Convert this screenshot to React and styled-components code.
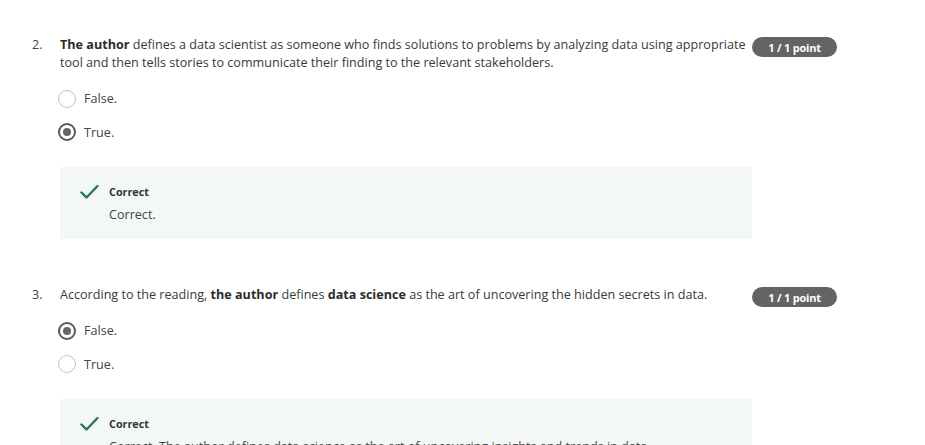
import React from "react";
import styled, { createGlobalStyle } from "styled-components";

const Global = createGlobalStyle`
  body {
    margin: 0;
    background: #fff;
    font-family: "Open Sans", "Noto Sans", sans-serif;
    color: #373a3c;
  }
`;

const Page = styled.div`
  padding: 36px 0 0 32px;
  height: 445px;
  box-sizing: border-box;
  overflow: hidden;
`;

const Question = styled.section`
  display: flex;
  align-items: flex-start;
  margin-bottom: 47px;
`;

const Number = styled.div`
  width: 28px;
  font-size: 12.6px;
  line-height: 18px;
  color: #444;
`;

const Content = styled.div`
  width: 692px;
`;

const Prompt = styled.p`
  margin: 0;
  font-size: 12.6px;
  line-height: 18px;
  b {
    font-weight: 700;
    color: #2b2b2b;
  }
`;

const Options = styled.div`
  margin-top: 10px;
  display: flex;
  flex-direction: column;
`;

const Option = styled.label`
  display: flex;
  align-items: center;
  height: 33.5px;
  font-size: 12.6px;
  color: #444;
`;

const Radio = styled.span`
  width: 18px;
  height: 18px;
  box-sizing: border-box;
  border-radius: 50%;
  margin: 0 8px 0 -2px;
  border: ${(p) => (p.$checked ? "2px solid #5a5a5a" : "1.5px solid #c4c4c4")};
  display: flex;
  align-items: center;
  justify-content: center;
  &::after {
    content: "";
    display: ${(p) => (p.$checked ? "block" : "none")};
    width: 8px;
    height: 8px;
    border-radius: 50%;
    background: #666;
  }
`;

const Feedback = styled.div`
  margin-top: 18px;
  background: #f3f8f6;
  padding: 16px 20px 15px 20px;
  display: flex;
  gap: 10px;
`;

const Check = styled.svg`
  width: 19px;
  height: 16px;
  margin-top: 1px;
  flex-shrink: 0;
`;

const FeedbackBody = styled.div`
  display: flex;
  flex-direction: column;
`;

const Label = styled.div`
  font-size: 10.8px;
  font-weight: 700;
  line-height: 18px;
  color: #333;
`;

const Explanation = styled.div`
  font-size: 12.6px;
  line-height: 18px;
  margin-top: 5px;
  color: #444;
`;

const Badge = styled.span`
  margin-top: 1px;
  width: 85px;
  height: 20px;
  border-radius: 10px;
  background: #646464;
  color: #fff;
  font-size: 11px;
  font-weight: 700;
  display: flex;
  align-items: center;
  justify-content: center;
  letter-spacing: -0.2px;
`;

const CheckIcon = () => (
  <Check viewBox="0 0 19 16">
    <path d="M1.5 8.5 L6.5 13.5 L17.5 2" fill="none" stroke="#2a7556" strokeWidth="2.4" strokeLinecap="round" strokeLinejoin="round" />
  </Check>
);

const questions = [
  {
    n: "2.",
    prompt: (
      <>
        <b>The author</b> defines a data scientist as someone who finds solutions to problems by analyzing data using appropriate tool and then tells stories to communicate their finding to the relevant stakeholders.
      </>
    ),
    options: ["False.", "True."],
    picked: 1,
    explanation: "Correct.",
  },
  {
    n: "3.",
    prompt: (
      <>
        According to the reading, <b>the author</b> defines <b>data science</b> as the art of uncovering the hidden secrets in data.
      </>
    ),
    options: ["False.", "True."],
    picked: 0,
    explanation: "Correct. The author defines data science as the art of uncovering insights and trends in data.",
  },
];

export default function App() {
  return (
    <>
      <Global />
      <Page>
        {questions.map((q) => (
          <Question key={q.n}>
            <Number>{q.n}</Number>
            <Content>
              <Prompt>{q.prompt}</Prompt>
              <Options>
                {q.options.map((o, i) => (
                  <Option key={o}>
                    <Radio $checked={i === q.picked} />
                    {o}
                  </Option>
                ))}
              </Options>
              <Feedback>
                <CheckIcon />
                <FeedbackBody>
                  <Label>Correct</Label>
                  <Explanation>{q.explanation}</Explanation>
                </FeedbackBody>
              </Feedback>
            </Content>
            <Badge>1 / 1 point</Badge>
          </Question>
        ))}
      </Page>
    </>
  );
}
